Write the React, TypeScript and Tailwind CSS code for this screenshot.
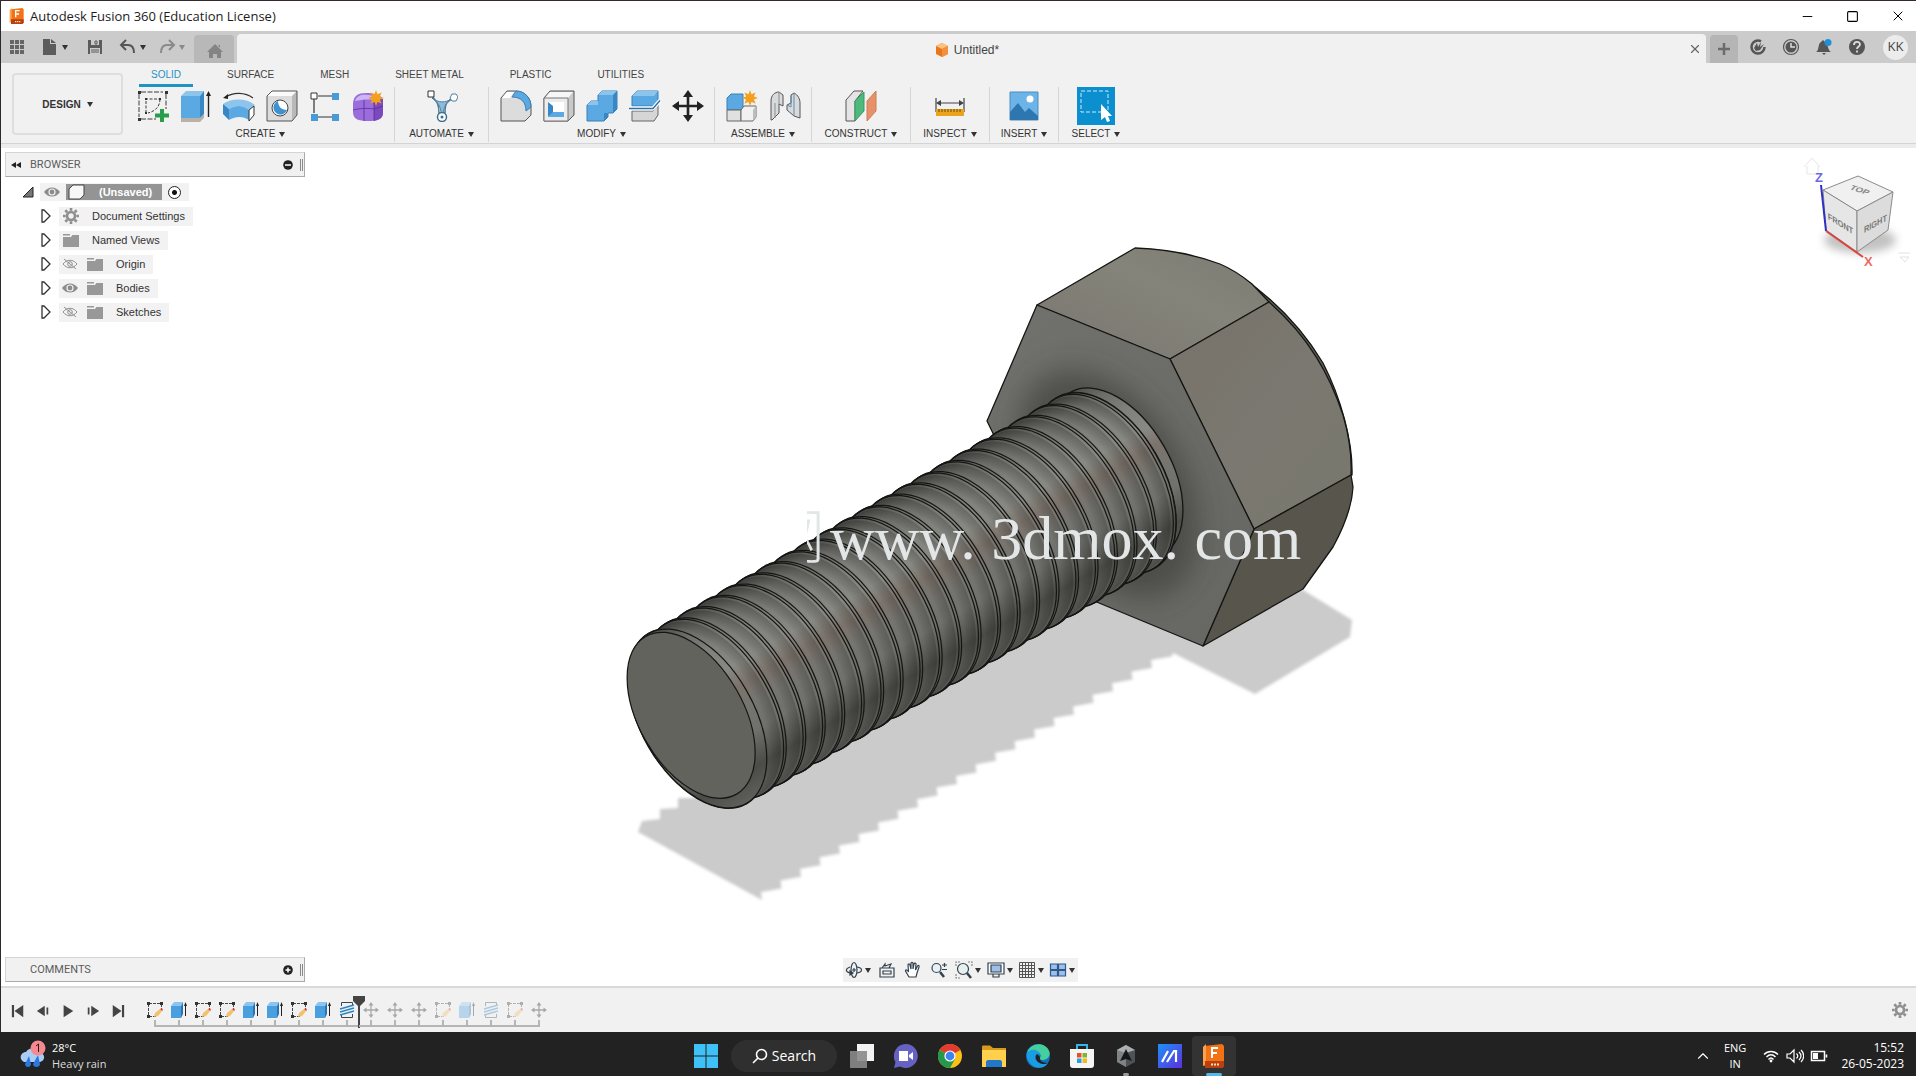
import React from "react";
import { Minus, Square, X, ChevronUp } from "lucide-react";

type Kids = { children?: React.ReactNode };

const Caret = ({ dim = false }: { dim?: boolean }) => (
  <svg viewBox="0 0 6 5" className={dim ? "h-[5px] w-[6px] shrink-0 fill-[#8a8a8a]" : "h-[5px] w-[6px] shrink-0 fill-[#333]"}>
    <path d="M0 0h6L3 5z" />
  </svg>
);

const Icon = ({ children }: Kids) => (
  <svg viewBox="0 0 32 32" className="h-8 w-8 shrink-0" fill="none" strokeLinejoin="round">
    {children}
  </svg>
);

/* ---------- ribbon icons ---------- */

const SketchIcon = () => (
  <Icon>
    <g stroke="#3c3c3c" strokeWidth="1">
      <path d="M4 2h22M2 4v23M4 29h15M29 4v15" strokeDasharray="5 1.5" />
      <path d="M8 9h14M9 11v11M23 9c0 7-4 12-12 14" strokeDasharray="3 1.5" />
    </g>
    <path d="M1 1h3v3H1zM28 1h3v3h-3zM1 28h3v3H1zM8 8h2v2H8zM22 8h2v2h-2zM8 22h2v2H8z" fill="#333" />
    <path d="M23 19h4v4.500h5v4h-5V32h-4v-4.500h-5v-4h5z" fill="#2a9d4a" />
  </Icon>
);

const ExtrudeIcon = () => (
  <Icon>
    <path d="M1 28h19l4-4v4l-4 4H1z" fill="#b9b0a8" />
    <path d="M1 6l5-5h18l-4 5z" fill="#8cc4ee" />
    <path d="M1 6h19v22H1z" fill="#5ba9e2" />
    <path d="M20 6l4-5v23l-4 4z" fill="#3886c4" />
    <path d="M28.500 27V4" stroke="#222" strokeWidth="1.400" />
    <path d="M28.500 1l-2.500 5h5z" fill="#222" />
  </Icon>
);

const RevolveIcon = () => (
  <Icon>
    <path d="M3 7C10 2 22 2 30 8" stroke="#333" strokeWidth="1.200" />
    <path d="M0 8l5-4v5z" fill="#222" />
    <path d="M0 14c9-6 23-6 32 1l-6 5c-6-5-13-5-20-1z" fill="#8cc4ee" />
    <path d="M0 14l6 5v11l-6-6z" fill="#3886c4" />
    <path d="M6 19c7-4 14-4 20 1v10c-6-4-13-4-20 0z" fill="#5ba9e2" />
    <path d="M26 20l5-4v9l-5 6z" fill="#fff" stroke="#333" />
  </Icon>
);

const HoleIcon = () => (
  <Icon>
    <path d="M1 6l5-5h25l-5 5z" fill="#fafafa" />
    <path d="M1 6h25v25H1z" fill="#dcdcdc" />
    <path d="M26 6l5-5v24l-5 6z" fill="#b9b9b9" />
    <path d="M1 6l5-5h25v24l-5 6H1z" stroke="#555" />
    <circle cx="14" cy="18" r="8" fill="#fff" stroke="#444" />
    <path d="M12 11c0 5 3 9 9 9a7 7 0 1 1-9-9z" fill="#3f92d0" />
  </Icon>
);

const PatternIcon = () => (
  <Icon>
    <path d="M9 6h14M5 9v14M9 27h14" stroke="#333" strokeWidth="1.200" />
    <path d="M2 3h6v6H2z" fill="#fff" stroke="#333" />
    <path d="M23 3h7v7h-7zM2 24h7v7H2zM23 24h7v7h-7z" fill="#4a9ad6" />
  </Icon>
);

const Star = ({ x, y }: { x: number; y: number }) => (
  <path
    transform={`translate(${x} ${y})`}
    d="M0-8l1.500 4.200L5.600-5.600 3.900-1.500 8 0 3.900 1.500 5.600 5.600 1.500 3.900 0 8-1.500 3.900-5.600 5.600-3.900 1.500-8 0-3.900-1.500-5.600-5.600-1.500-3.800z"
    fill="#f2a01e"
  />
);

const FormIcon = () => (
  <Icon>
    <path d="M1 14C1 6 6 3 14 3s17 2 17 8v11c0 7-5 9-15 9S1 29 1 22z" fill="#9b6cdb" />
    <path d="M3 11c2-6 7-7 13-6 4 0 6 2 5 5-5-1-12 0-18 1z" fill="#cdb4f2" />
    <path d="M22 11l9-2v14c0 5-4 7-9 8z" fill="#7a49bd" />
    <path d="M1 20c8-2 14-2 21-1l9-3M12 10v21M22 11v20" stroke="#5b2f98" strokeWidth=".8" />
    <Star x={24} y={8} />
  </Icon>
);

const AutomateIcon = () => (
  <Icon>
    <path d="M6 6c4 5 7 7 7 17h6C19 13 21 12 27 8" stroke="#4f7f9e" strokeWidth="1.500" />
    <path d="M6 8c6 5 14 5 19 1-6 4-7 9-8 15h-2C15 17 12 12 6 8z" fill="#8fbbd9" stroke="#4f7f9e" />
    <path d="M2 1h6v6H2z" fill="#fff" stroke="#333" />
    <path d="M24 8l2-4h4l2 3-2 4h-4z" fill="#fff" stroke="#4f7f9e" />
    <circle cx="16" cy="27" r="4.500" fill="#fff" stroke="#3f6f90" strokeWidth="1.500" />
    <circle cx="16" cy="27" r="1.500" fill="#3f6f90" />
  </Icon>
);

const FilletIcon = () => (
  <Icon>
    <path d="M1 8l6-7h8c10 0 16 7 16 16v8l-6 6H1z" fill="#dcdcdc" stroke="#555" />
    <path d="M2 8l5-6h7l-4 6z" fill="#fff" />
    <path d="M12 7l4-6c9 0 15 7 15 16l-5 4C26 12 21 7 12 7z" fill="#5ba9e2" stroke="#3b7fb5" />
  </Icon>
);

const ShellIcon = () => (
  <Icon>
    <path d="M1 8l6-7h24v24l-6 6H1z" fill="#c9c9c9" stroke="#555" />
    <path d="M2 8l5-6h23l-5 6z" fill="#f7f7f7" />
    <path d="M1 8h24v23H1z" fill="#ececec" stroke="#777" />
    <path d="M5 12h16v15H5z" fill="#fff" />
    <path d="M5 12l5 4v7l-5 4z" fill="#3886c4" />
    <path d="M5 27l5-5h11v5z" fill="#5ba9e2" />
  </Icon>
);

const CombineIcon = () => (
  <Icon>
    <path d="M12 5l4-4h15v18l-4 4h-5v4l-4 4H1V15l4-4h7z" fill="#5ba9e2" stroke="#3b7fb5" />
    <path d="M12 5l4-4h15l-4 4zM1 15l4-4h7v4z" fill="#8cc4ee" />
    <path d="M27 5l4-4v18l-4 4zM18 23h4v4l-4 4z" fill="#3886c4" />
  </Icon>
);

const SplitIcon = () => (
  <Icon>
    <path d="M3 6l5-5h21v9l-4 6H3z" fill="#5ba9e2" stroke="#3b7fb5" />
    <path d="M3 6l5-5h21l-4 5z" fill="#8cc4ee" />
    <path d="M3 21h21l5-6v10l-4 6H3z" fill="#d6d6d6" stroke="#666" />
    <path d="M0 18.500h24l7-8" stroke="#fff" strokeWidth="4" />
    <path d="M0 18.500h24l7-8" stroke="#2b6fa3" strokeWidth="1.400" />
  </Icon>
);

const MoveGlyph = ({ color }: { color: string }) => (
  <g stroke={color} fill={color}>
    <path d="M16 5v22M5 16h22" strokeWidth="2.600" />
    <path d="M16 0l5 7H11zM16 32l5-7H11zM0 16l7-5v10zM32 16l-7-5v10z" stroke="none" />
  </g>
);

const AssembleIcon = () => (
  <Icon>
    <path d="M1 8l4-4h12v16H1z" fill="#5ba9e2" stroke="#3b7fb5" />
    <path d="M1 20h14v11H1z" fill="#e0e0e0" stroke="#666" />
    <path d="M15 20l3-4h12v11l-3 4H15z" fill="#f1f1f1" stroke="#666" />
    <path d="M27 20l3-4v11l-3 4z" fill="#bdbdbd" />
    <Star x={24} y={8} />
  </Icon>
);

const JointIcon = () => (
  <Icon>
    <path d="M2 11c0-6 4-9 8-9l4 3v11l-4-2v9l-7 7H2z" fill="#d8dadc" stroke="#555" />
    <path d="M10 2v12M6 28V13" stroke="#8a8f93" />
    <path d="M18 15l4-2V5l3-2c4 2 6 6 6 10v15l-6-2-7-6z" fill="#d8dadc" stroke="#555" />
    <path d="M25 3v23M18 15l4 2V6" stroke="#5e8fae" />
  </Icon>
);

const ConstructIcon = () => (
  <Icon>
    <path d="M1 10L9 1h9L10 11v20H1z" fill="#e4e4e4" stroke="#555" />
    <path d="M10 11l9-9v19l-9 10z" fill="#4db97c" stroke="#3a9a63" />
    <path d="M22 11l9-10v20l-9 10z" fill="#e5916a" stroke="#cf7d55" />
  </Icon>
);

const InspectIcon = () => (
  <Icon>
    <path d="M2 8v14M30 8v14M4 13h24" stroke="#444" strokeWidth="1.200" />
    <path d="M2 13l5-3v6zM30 13l-5-3v6z" fill="#444" />
    <path d="M2 19h28v7H2z" fill="#eaa31d" />
    <path d="M5 19v3M8 19v3M11 19v3M14 19v3M17 19v3M20 19v3M23 19v3M26 19v3" stroke="#6b4a0c" />
  </Icon>
);

const InsertIcon = () => (
  <Icon>
    <path d="M2 2h28v28H2z" fill="#6cb4e8" stroke="#4a8dbd" />
    <path d="M2 22l8-9 7 9 4-4 9 8v4H2z" fill="#2d76b0" />
    <circle cx="22" cy="9" r="3.500" fill="#fff" />
  </Icon>
);

const SelectIcon = () => (
  <svg viewBox="0 0 38 38" className="h-[38px] w-[38px] shrink-0" fill="none">
    <path d="M0 0h38v38H0z" fill="#0b8fce" />
    <path d="M4 4h27v21H4z" stroke="#cfeaf8" strokeDasharray="4 2" />
    <path d="M24 17v16l4-3 2 5 3-1-2-5h4z" fill="#fff" />
  </svg>
);

const Group = ({ label, width, icons }: { label: string; width: string; icons: React.ReactNode[] }) => (
  <section className={`${width} flex shrink-0 flex-col items-center border-r border-[#d6d6d6] last:border-r-0`}>
    <div className="flex h-[38px] items-center justify-center">
      {icons.map((ic, i) => (
        <button key={i} type="button" aria-label={`${label} tool ${i + 1}`} className="flex w-[43px] items-center justify-center">
          {ic}
        </button>
      ))}
    </div>
    <button type="button" className="mt-px flex items-center gap-1 text-[10px] leading-4 text-[#333]">
      {label}
      <Caret />
    </button>
  </section>
);

/* ---------- browser ---------- */

const Eye = () => (
  <svg viewBox="0 0 16 12" className="h-3 w-4">
    <path d="M0 6C4 0 12 0 16 6 12 12 4 12 0 6z" fill="#8c8c8c" />
    <circle cx="8" cy="6" r="3.600" fill="#f1f1f1" />
    <circle cx="8" cy="6" r="2.400" fill="#8c8c8c" />
  </svg>
);

const EyeOff = () => (
  <svg viewBox="0 0 16 12" className="h-3 w-4" fill="none" stroke="#909090">
    <path d="M1 6c4-5 10-5 14 0-4 5-10 5-14 0zM2 1l12 10" />
    <circle cx="8" cy="6" r="2.300" />
  </svg>
);

const Folder = () => (
  <svg viewBox="0 0 18 14" className="h-[14px] w-[18px]" fill="#989898">
    <path d="M1 1h7v1.500H1zM1 4h8l1.500-2H17v12H1z" />
  </svg>
);

const Gear = () => (
  <svg viewBox="0 0 18 18" className="h-4 w-4" fill="none" stroke="#8f8f8f">
    <circle cx="9" cy="9" r="4.500" strokeWidth="3" />
    <path d="M9 0v3M9 15v3M0 9h3M15 9h3M2.600 2.600l2.200 2.200M13.200 13.200l2.200 2.200M2.600 15.400l2.200-2.200M13.200 4.800l2.200-2.200" strokeWidth="3" />
  </svg>
);

const Expander = () => (
  <svg viewBox="0 0 10 14" className="h-[14px] w-[10px]" fill="#fff" stroke="#333" strokeWidth="1.300">
    <path d="M1 1h2l6 6-6 6H1z" />
  </svg>
);

const TreeRow = ({ eye, icon, label }: { eye?: React.ReactNode; icon: React.ReactNode; label: string }) => (
  <li className="flex h-6 items-center gap-2 pl-[36px]">
    <button type="button" aria-label={`Expand ${label}`}>
      <Expander />
    </button>
    <div className="flex h-[19px] items-center bg-[#f2f2f2] pr-2 pl-[3px]">
      {eye && (
        <button type="button" aria-label={`Toggle ${label}`} className="mr-2">
          {eye}
        </button>
      )}
      <span className="flex w-[18px] justify-center">{icon}</span>
      <span className="ml-3 text-[11px] leading-4 text-[#333]">{label}</span>
    </div>
  </li>
);

const PanelBar = ({ title, plus }: { title: string; plus?: boolean }) => (
  <header className="flex h-[25px] w-[300px] items-center border border-[#d4d4d4] border-r-[#aaa] border-b-[#aaa] bg-[#f1f1f1] pl-1">
    <svg viewBox="0 0 12 8" className="h-2 w-3 fill-[#222]">
      {!plus && <path d="M6 1v6L1 4zM11 1v6L6 4z" />}
    </svg>
    <h2 className="ml-2 flex-1 font-[Roboto] text-[11px] leading-4 text-[#5c5c5c]">{title}</h2>
    <button type="button" aria-label={plus ? "Open comments" : "Collapse browser"}>
      <svg viewBox="0 0 10 10" className="h-[10px] w-[10px]">
        <circle cx="5" cy="5" r="4.800" fill="#222" />
        <path d={plus ? "M2.500 5h5M5 2.500v5" : "M2 5h6"} stroke="#fff" strokeWidth="1.500" />
      </svg>
    </button>
    <span className="mr-px ml-[7px] h-3 w-[3px] border-x border-[#888]" />
  </header>
);

/* ---------- bolt ---------- */

const PITCH = 22.5;
const TURNS = 21;

const Bolt = () => {
  const discs: { x: number; ry: number; crest: boolean; shade: number }[] = [];
  for (let k = TURNS; k >= 0; k--) {
    const x0 = 3 + k * PITCH;
    if (k < TURNS) {
      for (let s = 9; s >= 1; s--) {
        const t = s / 10;
        discs.push({ x: x0 + t * (PITCH - 3), ry: 98 - 4 * Math.sin(Math.PI * t), crest: false, shade: t > 0.4 ? (t - 0.4) * 0.35 : 0 });
      }
    }
    discs.push({ x: x0, ry: 98, crest: true, shade: 0 });
    if (k > 0) discs.push({ x: x0 - 3, ry: 98, crest: true, shade: 0 });
  }
  let saw = "";
  for (let i = 0; i < 21; i++) {
    const x = 762 + i * 19.5;
    const y = 900 - i * 11.6;
    saw += `L${x - 1} ${y - 8}L${x + 19.5} ${y - 11.6}`;
  }
  return (
    <svg viewBox="538 217 840 700" className="h-[700px] w-[840px] shrink-0" role="img" aria-label="Hex bolt model" strokeLinejoin="round">
      <defs>
        <linearGradient id="shaft" gradientUnits="userSpaceOnUse" x1="0" y1="-98" x2="0" y2="98">
          <stop offset="0" stopColor="#4c4d49" />
          <stop offset=".1" stopColor="#6c6d68" />
          <stop offset=".22" stopColor="#7f807b" />
          <stop offset=".36" stopColor="#888983" />
          <stop offset=".46" stopColor="#7b736b" />
          <stop offset=".58" stopColor="#757570" />
          <stop offset=".7" stopColor="#70716c" />
          <stop offset=".86" stopColor="#4b4c47" />
          <stop offset="1" stopColor="#5f605b" />
        </linearGradient>
        <linearGradient id="top" x1="0" y1="1" x2="1" y2="0">
          <stop offset="0" stopColor="#78756d" />
          <stop offset=".6" stopColor="#85847b" />
          <stop offset="1" stopColor="#7b7b73" />
        </linearGradient>
        <linearGradient id="side" x1="0" y1="0" x2="1" y2="1">
          <stop offset="0" stopColor="#78726a" />
          <stop offset=".5" stopColor="#7a7870" />
          <stop offset="1" stopColor="#79786d" />
        </linearGradient>
        <linearGradient id="face" x1="0" y1="0" x2="1" y2="1">
          <stop offset="0" stopColor="#71726d" />
          <stop offset="1" stopColor="#666762" />
        </linearGradient>
        <clipPath id="hex">
          <path d="M1037 305L1170 359 1254 529 1203 646 1070 591 987 421z" />
        </clipPath>
        <clipPath id="mark">
          <path d="M807 500h30v80h-30z" />
        </clipPath>
        <filter id="soft" x="-5%" y="-5%" width="110%" height="110%">
          <feGaussianBlur stdDeviation="1.600" />
        </filter>
        <filter id="occl" x="-30%" y="-30%" width="160%" height="160%">
          <feGaussianBlur stdDeviation="14" />
        </filter>
      </defs>

      <path
        filter="url(#soft)"
        fill="#cbcbcb"
        d={`M638 832L762 900${saw}L1173 653 1255 694 1350 637 1352 620 1303 590 1150 560 1000 560 700 780 696 798 678 798 678 808 660 809 660 819 642 821z`}
      />

      <g stroke="#151513" strokeWidth="1.300">
        <path fill="#5f5f58" d="M1240 276C1275 300 1302 328 1323 363 1341 398 1353 442 1352 475L1330 460z" />
        <path fill="url(#top)" d="M1037 305L1135 248C1166 249 1193 254 1220 264 1234 270 1246 279 1252 284L1269 302 1170 359z" />
        <path fill="url(#side)" d="M1170 359L1269 302C1310 338 1330 376 1343 415 1348 432 1352 455 1351 475L1254 529z" />
        <path fill="#58554c" d="M1254 529L1351 475 1353 487C1352 506 1345 525 1333 547L1303 589 1203 646z" />
        <path fill="url(#face)" d="M1037 305L1170 359 1254 529 1203 646 1070 591 987 421z" />
      </g>
      <g clipPath="url(#hex)">
        <ellipse cx="1108" cy="484" rx="124" ry="76" transform="rotate(60 1108 484)" fill="#3d3e3a" opacity=".65" filter="url(#occl)" />
      </g>

      <g transform="translate(695 720) rotate(-30)">
        <ellipse cx="489" cy="-3" rx="54" ry="93" fill="url(#shaft)" stroke="#151513" strokeWidth="1.300" />
        {discs.map((d, i) => (
          <ellipse key={i} cx={d.x} cy="0" rx={d.ry * 0.575 + 1} ry={d.ry + 1} fill="#1a1a18" />
        ))}
        {discs.map((d, i) => (
          <g key={i}>
            <ellipse
              cx={d.x}
              cy="0"
              rx={d.ry * 0.575}
              ry={d.ry}
              fill="url(#shaft)"
              stroke={d.crest ? "#151513" : "none"}
              strokeWidth="1.200"
            />
            {d.shade > 0 && <ellipse cx={d.x} cy="0" rx={d.ry * 0.575} ry={d.ry} fill="#000" opacity={d.shade} />}
          </g>
        ))}
        <ellipse cx="-1" cy="-6" rx="52" ry="91" fill="#62635d" stroke="#151513" strokeWidth="1.200" />
      </g>

      <text x="765" y="558" fontFamily="Noto Sans CJK SC, sans-serif" fontSize="60" fontWeight="300" fill="#e3e6e6" clipPath="url(#mark)">
        网
      </text>
      <text x="830" y="559" fontFamily="Liberation Serif, serif" fontSize="62" fill="#e3e6e6" xmlSpace="preserve">
        www. 3dmox. com
      </text>
    </svg>
  );
};

const ViewCube = () => (
  <svg viewBox="1796 152 116 124" className="h-[124px] w-[116px]" fontFamily="Liberation Sans, sans-serif" strokeLinejoin="round">
    <defs>
      <filter id="cs" x="-20%" y="-60%" width="140%" height="220%">
        <feGaussianBlur stdDeviation="4" />
      </filter>
    </defs>
    <ellipse cx="1860" cy="240" rx="36" ry="13" fill="#9a9a9a" opacity=".6" filter="url(#cs)" />
    <path d="M1804 167l8-9 8 9M1807 166v8h11v-8" fill="none" stroke="#e6e6e6" />
    <g stroke="#8b8b8b">
      <path d="M1858 176l-35 14 34 21 36-19z" fill="#f0f0f0" />
      <path d="M1823 190l34 21v41l-31-22z" fill="#e6e6e6" />
      <path d="M1857 211l36-19-5 38-31 22z" fill="#dcdcdc" />
    </g>
    <text transform="matrix(.9 .3 -.5 .6 1849 189)" fontSize="10" fontWeight="bold" fill="#888">TOP</text>
    <text transform="matrix(.82 .5 .05 1 1828 219)" fontSize="9" fontWeight="bold" fill="#777">FRONT</text>
    <text transform="matrix(.82 -.45 0 1 1864 233)" fontSize="9" fontWeight="bold" fill="#777">RIGHT</text>
    <path d="M1821 185l5 46" stroke="#2d2fc0" strokeWidth="2" />
    <path d="M1826 231l37 26" stroke="#d8463f" strokeWidth="2" />
    <text x="1815" y="182" fontSize="13" fontWeight="bold" fill="#6a6ae6">Z</text>
    <text x="1864" y="266" fontSize="13" fontWeight="bold" fill="#ec6a63">X</text>
    <path d="M1898 253h12M1900 257h9l-4 5z" fill="none" stroke="#e2e2e2" />
  </svg>
);

/* ---------- navigation bar ---------- */

const Nav = ({ children }: Kids) => (
  <svg viewBox="0 0 18 18" className="h-[18px] w-[18px]" fill="none" stroke="#33424f" strokeWidth="1.200">
    {children}
  </svg>
);

const navItems: { name: string; caret: boolean; width: string; icon: React.ReactNode }[] = [
  { name: "Orbit", caret: true, width: "w-[31px]", icon: <Nav><ellipse cx="9" cy="9" rx="3" ry="7.500" /><path d="M5 6c-5 2-5 5 1 6M12 6c6 1 6 5 0 6M9 7v4M7 9h4" /><path d="M5 10l3 2-3 2z" fill="#33424f" /></Nav> },
  { name: "Look at", caret: false, width: "w-[26px]", icon: <Nav><path d="M2 7h14v9H2zM5 10h8v3H5zM4 7l3-4v2l6-2-2 4" /></Nav> },
  { name: "Pan", caret: false, width: "w-[26px]", icon: <Nav><path d="M5 16L1.500 10c0-2 2-1 3 1L4 4c0-1.500 1.500-1.500 2 0l1 4V2.500c0-1.500 2-1.500 2 0V8l1-5c.5-1.500 2-1 2 0l-.5 6 2-4c.8-1 2-.5 1.500 1L13 12l-1 4z" fill="#fff" /></Nav> },
  { name: "Zoom", caret: false, width: "w-[26px]", icon: <Nav><circle cx="6.500" cy="7" r="4.500" fill="#e6f0f5" /><path d="M10 11l4 5" strokeWidth="2.500" /><path d="M12 4h5M14.500 2v4M12 8.500h5" /></Nav> },
  { name: "Fit", caret: true, width: "w-[33px]", icon: <Nav><path d="M1 5V1h4M13 1h4v4M1 13v4h4" stroke="#888" strokeDasharray="2 1" /><circle cx="8" cy="8" r="5.500" fill="#e6f0ee" /><path d="M12 12l4 5" strokeWidth="2.500" /></Nav> },
  { name: "Display settings", caret: true, width: "w-[31px]", icon: <Nav><path d="M1 2h16v11H1z" fill="#fff" /><path d="M4 4h10v7H4z" fill="#9cc0ea" /><path d="M6 13v3h6v-3" /></Nav> },
  { name: "Grid and snaps", caret: true, width: "w-[31px]", icon: <Nav><path d="M1.500 1.500h15v15h-15zM4.500 1.500v15M7.500 1.500v15M10.500 1.500v15M13.500 1.500v15M1.500 4.500h15M1.500 7.500h15M1.500 10.500h15M1.500 13.500h15" stroke="#555" strokeWidth="1" /></Nav> },
  { name: "Viewports", caret: true, width: "w-[31px]", icon: <Nav><path d="M1.500 3h7v5.500h-7zM9.500 3h7v5.500h-7zM1.500 9.500h7V15h-7zM9.500 9.500h7V15h-7z" fill="#9cc0ea" stroke="#2f5788" /></Nav> },
];

/* ---------- timeline ---------- */

type Kind = "sketch" | "extrude" | "thread" | "move";

const Feature = ({ kind }: { kind: Kind }) => {
  if (kind === "move")
    return (
      <svg viewBox="0 0 32 32" className="h-4 w-4">
        <MoveGlyph color="#222" />
      </svg>
    );
  return (
    <svg viewBox="0 0 16 16" className="h-4 w-4" fill="none">
      {kind === "sketch" && (
        <>
          <path d="M2 1.500h12M1.500 2v12M2 14.500h7M14.500 2v6" stroke="#444" strokeDasharray="3 1" />
          <path d="M0 0h3v3H0zM13 0h3v3h-3zM0 13h3v3H0z" fill="#333" />
          <path d="M7 15l1-4 5-4 2 2-4 5z" fill="#f0c26a" />
          <path d="M13 7l2-1 1 2-1 1z" fill="#e0403a" />
        </>
      )}
      {kind === "extrude" && (
        <>
          <path d="M0 4l3-4h9l-2 4z" fill="#8cc4ee" />
          <path d="M0 4h10v12H0z" fill="#4a9fdf" />
          <path d="M10 4l2-4v12l-2 4z" fill="#2b74b0" />
          <path d="M14.500 14V2" stroke="#222" />
          <path d="M14.500 0L13 4h3z" fill="#222" />
        </>
      )}
      {kind === "thread" && (
        <>
          <path d="M2.500 4V.5h11V3M2.500 13v2.500h11V12" stroke="#444" />
          <path d="M1 7l14-4M1 10l14-4M1 13l14-4" stroke="#2b86c5" strokeWidth="1.500" />
        </>
      )}
    </svg>
  );
};

const timeline: { kind: Kind; off?: boolean }[] = [
  { kind: "sketch" }, { kind: "extrude" }, { kind: "sketch" }, { kind: "sketch" }, { kind: "extrude" },
  { kind: "extrude" }, { kind: "sketch" }, { kind: "extrude" }, { kind: "thread" },
  { kind: "move", off: true }, { kind: "move", off: true }, { kind: "move", off: true }, { kind: "sketch", off: true },
  { kind: "extrude", off: true }, { kind: "thread", off: true }, { kind: "sketch", off: true }, { kind: "move", off: true },
];

const playback = [
  { name: "Go to start", d: "M1 1h2.500v14H1zM14 1v14L4 8z" },
  { name: "Step back", d: "M10 2v12L1 8zM12 4h2v8h-2z" },
  { name: "Play", d: "M3 1l11 7-11 7z" },
  { name: "Step forward", d: "M6 2v12l9-6zM2 4h2v8H2z" },
  { name: "Go to end", d: "M15 1h-2.500v14H15zM2 1v14l10-7z" },
];

/* ---------- taskbar ---------- */

const App24 = ({ children }: Kids) => (
  <svg viewBox="0 0 24 24" className="h-6 w-6" fill="none">
    {children}
  </svg>
);

const FusionMark = () => (
  <>
    <path d="M3 2l17-2 2 2v20l-2 2H3z" fill="#f47216" />
    <path d="M1 3l3-3v21l-3 1z" fill="#ffa04d" />
    <path d="M3 17h19v5l-2 2H3z" fill="#b8400e" />
    <path d="M10 14V4h6M10 9h5" stroke="#fff" strokeWidth="2" />
    <path d="M9 20.500h8" stroke="#ffd9b8" strokeWidth="2" strokeDasharray="2 1" />
  </>
);

const apps: { name: string; state?: "open" | "active"; icon: React.ReactNode }[] = [
  { name: "Task view", icon: <App24><path d="M7 0h17v17H7z" fill="#f3f3f3" /><path d="M0 7h17v17H0z" fill="#8a8a8a" opacity=".9" /></App24> },
  { name: "Chat", icon: <App24><path d="M12 0a12 12 0 1 1-6 22.500L0 24l1.500-6A12 12 0 0 1 12 0z" fill="#6662c4" /><path d="M5 7h9v10H5zM15 11l4-3v8l-4-3z" fill="#fff" /></App24> },
  { name: "Chrome", icon: <App24><circle cx="12" cy="12" r="12" fill="#fbc116" /><path d="M12 12L1.600 6a12 12 0 0 1 20.800 0z" fill="#e33b2e" /><path d="M12 12L1.600 6A12 12 0 0 0 12 24l5-9z" fill="#229a4a" /><circle cx="12" cy="12" r="5.600" fill="#fff" /><circle cx="12" cy="12" r="4.400" fill="#3f83f0" /></App24> },
  { name: "File Explorer", icon: <App24><path d="M0 3c0-1 .5-1.500 1.500-1.500H8L11 4h13v4H0z" fill="#d99a1b" /><path d="M0 6h24v17H0z" fill="#ffd04d" /><path d="M4 23v-5c0-1 1-2 2-2h12c1 0 2 1 2 2v5z" fill="#1f78c9" /></App24> },
  { name: "Edge", icon: <App24><circle cx="12" cy="12" r="12" fill="#1370c4" /><path d="M1 9C4-2 20-3 23.500 8c1 5-3 8-7 8-3 0-3-2-2-3 1-3-2-6-6-6-3 0-6 1-7.500 2z" fill="#45cf9c" /><path d="M1 9c3-5 12-4 13 2l-3-1c-4 3-1 9 6 10 2 0 4-.5 5-1-4 6-12 6-16 2-4-3-6-8-5-12z" fill="#1b9de2" /><path d="M11 10c-3 3-1 9 6 10 2 0 4-.5 5-1-6 0-9-3-8-6z" fill="#222" /></App24> },
  { name: "Store", icon: <App24><path d="M7 5V1h10v4" stroke="#36b5ec" strokeWidth="2" /><path d="M0 5h24v16c0 2-1 3-3 3H3c-2 0-3-1-3-3z" fill="#f5f5f5" /><path d="M7 9h4.500v4.500H7z" fill="#e8502c" /><path d="M12.500 9H17v4.500h-4.500z" fill="#7db82b" /><path d="M7 14.500h4.500V19H7z" fill="#2a9de0" /><path d="M12.500 14.500H17V19h-4.500z" fill="#f9b61c" /></App24> },
  { name: "Assistant", state: "open", icon: <App24><path d="M12 1l9 5v12l-9 5-9-5V6z" fill="#4d5256" /><path d="M12 1v22l-9-5V6z" fill="#7d8387" /><path d="M12 1l9 5-9 3-9-3z" fill="#a9afb3" /><path d="M12 5l6 12-6-2-6 2z" fill="#15181a" /></App24> },
  { name: "MyASUS", icon: <App24><defs><linearGradient id="ma" x1="0" y1="0" x2="1" y2="1"><stop offset="0" stopColor="#1f8ff5" /><stop offset="1" stopColor="#5a31e0" /></linearGradient></defs><path d="M0 0h24v24H0z" fill="url(#ma)" /><path d="M4 18L10 7M9 18l7-11h2v11" stroke="#fff" strokeWidth="2.200" /></App24> },
  { name: "Fusion 360", state: "active", icon: <App24><FusionMark /></App24> },
];

const TabIcon = ({ children }: Kids) => (
  <svg viewBox="0 0 18 18" className="h-[18px] w-[18px]" fill="none">
    {children}
  </svg>
);

export default function App() {
  return (
    <div className="flex h-screen min-w-[1200px] flex-col overflow-hidden border-t border-[#35292f] bg-white font-['Liberation_Sans',Arial,sans-serif]">
      <div className="flex min-h-0 flex-1 flex-col border-l border-[#2b2b2b]">
        <header className="flex h-[30px] shrink-0 items-center bg-white pl-2">
          <svg viewBox="0 0 24 24" className="h-4 w-4" fill="none">
            <FusionMark />
          </svg>
          <h1 className="ml-[5px] flex-1 font-['Open_Sans'] text-[13px] leading-5 text-[#1c1c1c]">Autodesk Fusion 360 (Education License)</h1>
          <div className="flex items-center gap-[31px] pr-[10px] text-black">
            <button type="button" aria-label="Minimize"><Minus size={15} strokeWidth={1.5} /></button>
            <button type="button" aria-label="Maximize"><Square size={13} strokeWidth={2} /></button>
            <button type="button" aria-label="Close"><X size={16} strokeWidth={1.5} /></button>
          </div>
        </header>

        <div className="flex h-8 shrink-0 items-end bg-[#cbcbcb]">
          <div className="flex h-8 w-[193px] items-center pl-[7px] text-[#555]">
            <button type="button" aria-label="Data panel">
              <TabIcon><path d="M2 2h4v4H2zM7 2h4v4H7zM12 2h4v4h-4zM2 7h4v4H2zM7 7h4v4H7zM12 7h4v4h-4zM2 12h4v4H2zM7 12h4v4H7zM12 12h4v4h-4z" fill="#666" /></TabIcon>
            </button>
            <button type="button" aria-label="File" className="ml-[14px] flex items-center gap-1">
              <TabIcon><path d="M3 1h7v5h6v11H3zM11 1l5 4h-5z" fill="#5c5c5c" /></TabIcon>
              <Caret />
            </button>
            <button type="button" aria-label="Save" className="ml-[18px]">
              <TabIcon><path d="M2 2h14v14H2z" fill="#5c5c5c" /><path d="M5 2h8v5H5zM4 10h10v6H4z" fill="#cbcbcb" /><path d="M9 3h2v3H9zM5 12h8M5 14h8" stroke="#5c5c5c" /></TabIcon>
            </button>
            <button type="button" aria-label="Undo" className="ml-[15px] flex items-center gap-[3px]">
              <TabIcon><path d="M7 2L2 7l5 5M2.500 7H9c4 0 6 3 6 8" stroke="#555" strokeWidth="2" /></TabIcon>
              <Caret />
            </button>
            <button type="button" aria-label="Redo" className="ml-3 flex items-center gap-[3px]">
              <TabIcon><path d="M11 2l5 5-5 5M15.500 7H9c-4 0-6 3-6 8" stroke="#8a8a8a" strokeWidth="2" /></TabIcon>
              <Caret dim />
            </button>
          </div>
          <button type="button" aria-label="Home" className="flex h-7 w-10 items-center justify-center rounded-t bg-[#b8b8b8] pt-1 pl-[2px]">
            <TabIcon><path d="M9 2l8 8h-2v6h-4v-4H7v4H3v-6H1zM12 3h2v3z" fill="#848484" /></TabIcon>
          </button>
          <div className="ml-[3px] flex h-[29px] flex-1 items-center rounded-t bg-[#f1f1f1]">
            <div className="flex flex-1 items-center justify-center gap-1 pt-[2px] pl-2 text-[12px] leading-4 text-[#444]">
              <svg viewBox="0 0 16 16" className="h-4 w-4">
                <path d="M8 1l6 3v8l-6 3-6-3V4z" fill="#e8761c" />
                <path d="M8 1l6 3-6 3-6-3z" fill="#ffc27e" />
                <path d="M8 7l6-3v8l-6 3z" fill="#f09040" />
              </svg>
              Untitled*
            </div>
            <button type="button" aria-label="Close tab" className="mr-1 text-[#666]"><X size={14} strokeWidth={2} /></button>
          </div>
          <button type="button" aria-label="New tab" className="ml-1 flex h-7 w-7 items-center justify-center rounded-t bg-[#b5b5b5]">
            <TabIcon><path d="M9 3v12M3 9h12" stroke="#6c6c6c" strokeWidth="2.500" /></TabIcon>
          </button>
          <div className="flex h-8 items-center gap-[15px] pr-2 pl-[11px]">
            <button type="button" aria-label="Extensions">
              <TabIcon><circle cx="9" cy="9" r="6.500" stroke="#555" strokeWidth="2.500" strokeDasharray="33 8" /><path d="M5 10l3-5 1 4 3-5-1 5 4-3-4 6-4 1z" fill="#555" /></TabIcon>
            </button>
            <button type="button" aria-label="Job status">
              <TabIcon><circle cx="9" cy="9" r="7.500" stroke="#555" strokeWidth="1.200" /><circle cx="9" cy="9" r="5.500" fill="#555" /><path d="M9 5v4h4" stroke="#ddd" strokeWidth="1.500" /></TabIcon>
            </button>
            <button type="button" aria-label="Notifications">
              <TabIcon><path d="M1 14c3-1 2-9 5-10l2-2 2 2c3 1 3 9 6 10zM7 15h4l-2 2z" fill="#555" /><circle cx="13" cy="4.500" r="3.500" fill="#1f8fd6" /></TabIcon>
            </button>
            <button type="button" aria-label="Help">
              <TabIcon><circle cx="9" cy="9" r="8" fill="#555" /><path d="M6 7c0-4 6-4 6-.5 0 2-3 2-3 4.500M9 12.500v2" stroke="#ddd" strokeWidth="1.800" /></TabIcon>
            </button>
            <button type="button" className="ml-[2px] flex h-[25px] w-[25px] items-center justify-center rounded-full bg-[#ececec] font-['Open_Sans'] text-[13px] text-[#444]">KK</button>
          </div>
        </div>

        <div className="flex h-[85px] shrink-0 border-b-4 border-[#ececec] bg-[#f1f1f1] shadow-[inset_0_-1px_0_#d4d4d4]">
          <button type="button" className="mt-[10px] ml-[11px] flex h-[62px] w-[111px] items-center justify-center gap-[6px] rounded border-2 border-[#dedede] text-[10px] font-bold text-[#333]">
            DESIGN
            <Caret />
          </button>
          <div className="flex flex-col pl-[9px]">
            <nav className="flex h-6 gap-[22px] pl-[7px] text-[10px] leading-4 text-[#444]">
              {["SOLID", "SURFACE", "MESH", "SHEET METAL", "PLASTIC", "UTILITIES"].map((t, i) => (
                <button
                  key={t}
                  type="button"
                  className={i === 0 ? "h-6 border-b-[3px] border-[#1f93c4] px-3 pt-1 pb-px text-[#1f93c4]" : "h-6 px-3 pt-1 pb-1"}
                >
                  {t}
                </button>
              ))}
            </nav>
            <div className="flex">
              <Group label="CREATE" width="w-[263px] pr-[5px]" icons={[<SketchIcon />, <ExtrudeIcon />, <RevolveIcon />, <HoleIcon />, <PatternIcon />, <FormIcon />]} />
              <Group label="AUTOMATE" width="w-[94px]" icons={[<AutomateIcon />]} />
              <Group label="MODIFY" width="w-[226px]" icons={[<FilletIcon />, <ShellIcon />, <CombineIcon />, <SplitIcon />, <Icon><MoveGlyph color="#222" /></Icon>]} />
              <Group label="ASSEMBLE" width="w-[97px]" icons={[<AssembleIcon />, <JointIcon />]} />
              <Group label="CONSTRUCT" width="w-[99px]" icons={[<ConstructIcon />]} />
              <Group label="INSPECT" width="w-[79px]" icons={[<InspectIcon />]} />
              <Group label="INSERT" width="w-[69px]" icons={[<InsertIcon />]} />
              <Group label="SELECT" width="w-[74px]" icons={[<SelectIcon />]} />
            </div>
          </div>
        </div>

        <main className="relative flex min-h-0 flex-1 items-center justify-center bg-white pr-[2px]">
          <Bolt />
          <aside className="absolute top-1 left-1">
            <PanelBar title="BROWSER" />
            <ul className="mt-[3px]">
              <li className="flex h-6 items-center pl-[17px]">
                <svg viewBox="0 0 12 12" className="h-3 w-3"><path d="M11 1v10H1z" fill="#777" stroke="#222" /></svg>
                <div className="ml-[6px] flex h-[18px] items-center bg-[#f2f2f2] pr-2 pl-1">
                  <button type="button" aria-label="Toggle document"><Eye /></button>
                  <div className="ml-[6px] flex h-4 items-center bg-[#949494] pr-[10px] pl-[2px]">
                    <svg viewBox="0 0 18 16" className="h-4 w-[18px]"><path d="M1 5l4-4h11v10l-4 4H1z" fill="#f7f7f7" stroke="#444" /></svg>
                    <span className="ml-[13px] text-[11px] leading-4 font-bold text-white">(Unsaved)</span>
                  </div>
                  <input type="radio" defaultChecked aria-label="Activate document" className="ml-[6px] h-[13px] w-[13px] appearance-none rounded-full border border-[#222] bg-[radial-gradient(circle,#111_0_2px,#fff_3px)]" />
                </div>
              </li>
              <TreeRow icon={<Gear />} label="Document Settings" />
              <TreeRow icon={<Folder />} label="Named Views" />
              <TreeRow eye={<EyeOff />} icon={<Folder />} label="Origin" />
              <TreeRow eye={<Eye />} icon={<Folder />} label="Bodies" />
              <TreeRow eye={<EyeOff />} icon={<Folder />} label="Sketches" />
            </ul>
          </aside>
          <div className="absolute top-1 right-1"><ViewCube /></div>
          <div className="absolute bottom-1 left-1"><PanelBar title="COMMENTS" plus /></div>
          <div className="absolute bottom-1 left-1/2 flex h-6 -translate-x-[116px] items-center bg-[#f1f1f1]">
            {navItems.map((n) => (
              <button key={n.name} type="button" aria-label={n.name} className={`${n.width} flex items-center justify-center gap-[2px]`}>
                {n.icon}
                {n.caret && <Caret />}
              </button>
            ))}
          </div>
        </main>

        <div className="flex h-[46px] shrink-0 items-center border-t-2 border-[#d9d9d9] bg-[#f1f1f1] pl-1">
          <div className="flex pt-px">
            {playback.map((p) => (
              <button key={p.name} type="button" aria-label={p.name} className="flex w-[25px] justify-center">
                <svg viewBox="0 0 16 16" className="h-[14px] w-[14px] fill-[#444]"><path d={p.d} /></svg>
              </button>
            ))}
          </div>
          <ol className="ml-[13px] flex h-full">
            {timeline.map((f, i) => (
              <li key={i} className="relative flex w-6 flex-col items-center pt-[14px]">
                <button type="button" aria-label={`${f.kind} ${i + 1}`} className={f.off ? "opacity-35" : ""}>
                  <Feature kind={f.kind} />
                </button>
                <svg viewBox="0 0 24 10" className="h-[10px] w-6" stroke="#b5b5b5" strokeWidth="2" fill="none">
                  <path d={i === 0 ? "M12 2v6h12" : i === timeline.length - 1 ? "M12 2v6H0" : "M0 8h24M12 2v6"} />
                </svg>
                {i === 8 && (
                  <svg viewBox="0 0 12 32" className="absolute top-2 -right-[6px] h-8 w-3 fill-[#444]">
                    <path d="M0 0h12v5L7 10v22H5V10L0 5z" />
                  </svg>
                )}
              </li>
            ))}
          </ol>
          <button type="button" aria-label="Timeline settings" className="mr-2 ml-auto"><Gear /></button>
        </div>
      </div>

      <footer className="grid h-11 shrink-0 grid-cols-[1fr_auto_1fr] items-center bg-[#222] pt-[3px] font-['Open_Sans'] text-[12px] leading-4 text-white">
        <button type="button" className="flex items-center gap-1 pl-5 text-left">
          <svg viewBox="0 0 28 32" className="h-8 w-7">
            <path d="M4 22c-6-3-3-10 2-10 3-5 12-5 14 1 6 1 5 8 0 9z" fill="#a9cdf5" />
            <path d="M9 16l-4 8c0 4 6 4 6 0zM18 15l-5 9c0 4 7 4 7 0z" fill="#2a78e0" />
            <circle cx="18" cy="8" r="7.500" fill="#f58a90" />
            <path d="M16 6l2.500-2v8" stroke="#32161a" fill="none" />
          </svg>
          <span className="text-[11px]">
            28°C
            <br />
            <span className="text-[#ddd]">Heavy rain</span>
          </span>
        </button>
        <div className="flex items-center pl-1">
          <button type="button" aria-label="Start" className="flex w-11 justify-center">
            <App24><path d="M0 0h11.500v11.500H0zM12.500 0H24v11.500H12.500zM0 12.500h11.500V24H0zM12.500 12.500H24V24H12.500z" fill="#3ec1f7" /></App24>
          </button>
          <button type="button" className="mx-[3px] flex h-8 w-[106px] items-center justify-center gap-1 rounded-full bg-[#2f2f2f] text-[14px]">
            <svg viewBox="0 0 16 16" className="h-4 w-4" fill="none" stroke="#fff" strokeWidth="1.600"><circle cx="9.500" cy="6.500" r="5" /><path d="M6 10l-5 5" /></svg>
            Search
          </button>
          {apps.map((a) => (
            <button
              key={a.name}
              type="button"
              aria-label={a.name}
              className={a.state === "active" ? "relative flex h-10 w-11 items-center justify-center rounded bg-[#333]" : "relative flex h-10 w-11 items-center justify-center"}
            >
              {a.icon}
              {a.state && <span className={a.state === "active" ? "absolute bottom-0 h-[3px] w-4 rounded bg-[#58b7e8]" : "absolute bottom-0 h-[3px] w-[6px] rounded bg-[#999]"} />}
            </button>
          ))}
        </div>
        <div className="flex items-center justify-end pr-3">
          <button type="button" aria-label="Show hidden icons"><ChevronUp size={18} strokeWidth={1.500} /></button>
          <button type="button" className="ml-3 text-center text-[11px]">ENG<br />IN</button>
          <button type="button" aria-label="Quick settings" className="ml-4 flex items-center gap-[6px]">
            <TabIcon><path d="M2 7.500c4-4 10-4 14 0M4.500 10c3-3 6-3 9 0M6.500 12.500c2-2 3-2 5 0" stroke="#fff" strokeWidth="1.400" /><circle cx="9" cy="14" r="1.400" fill="#fff" /></TabIcon>
            <TabIcon><path d="M1 7h3l4-4v12l-4-4H1zM10.500 6.500c1.500 1.500 1.500 3.500 0 5M13 5c2.500 2.500 2.500 5.500 0 8M15 3c3.500 3.500 3.500 8.500 0 12" stroke="#fff" strokeWidth="1.200" /></TabIcon>
            <TabIcon><path d="M1.500 4.500h13v9h-13zM16.500 7.500v3" stroke="#fff" strokeWidth="1.500" /><path d="M3 6h5v6H3z" fill="#fff" /></TabIcon>
          </button>
          <button type="button" className="ml-[13px] text-right text-[12px]">15:52<br />26-05-2023</button>
        </div>
      </footer>
    </div>
  );
}
